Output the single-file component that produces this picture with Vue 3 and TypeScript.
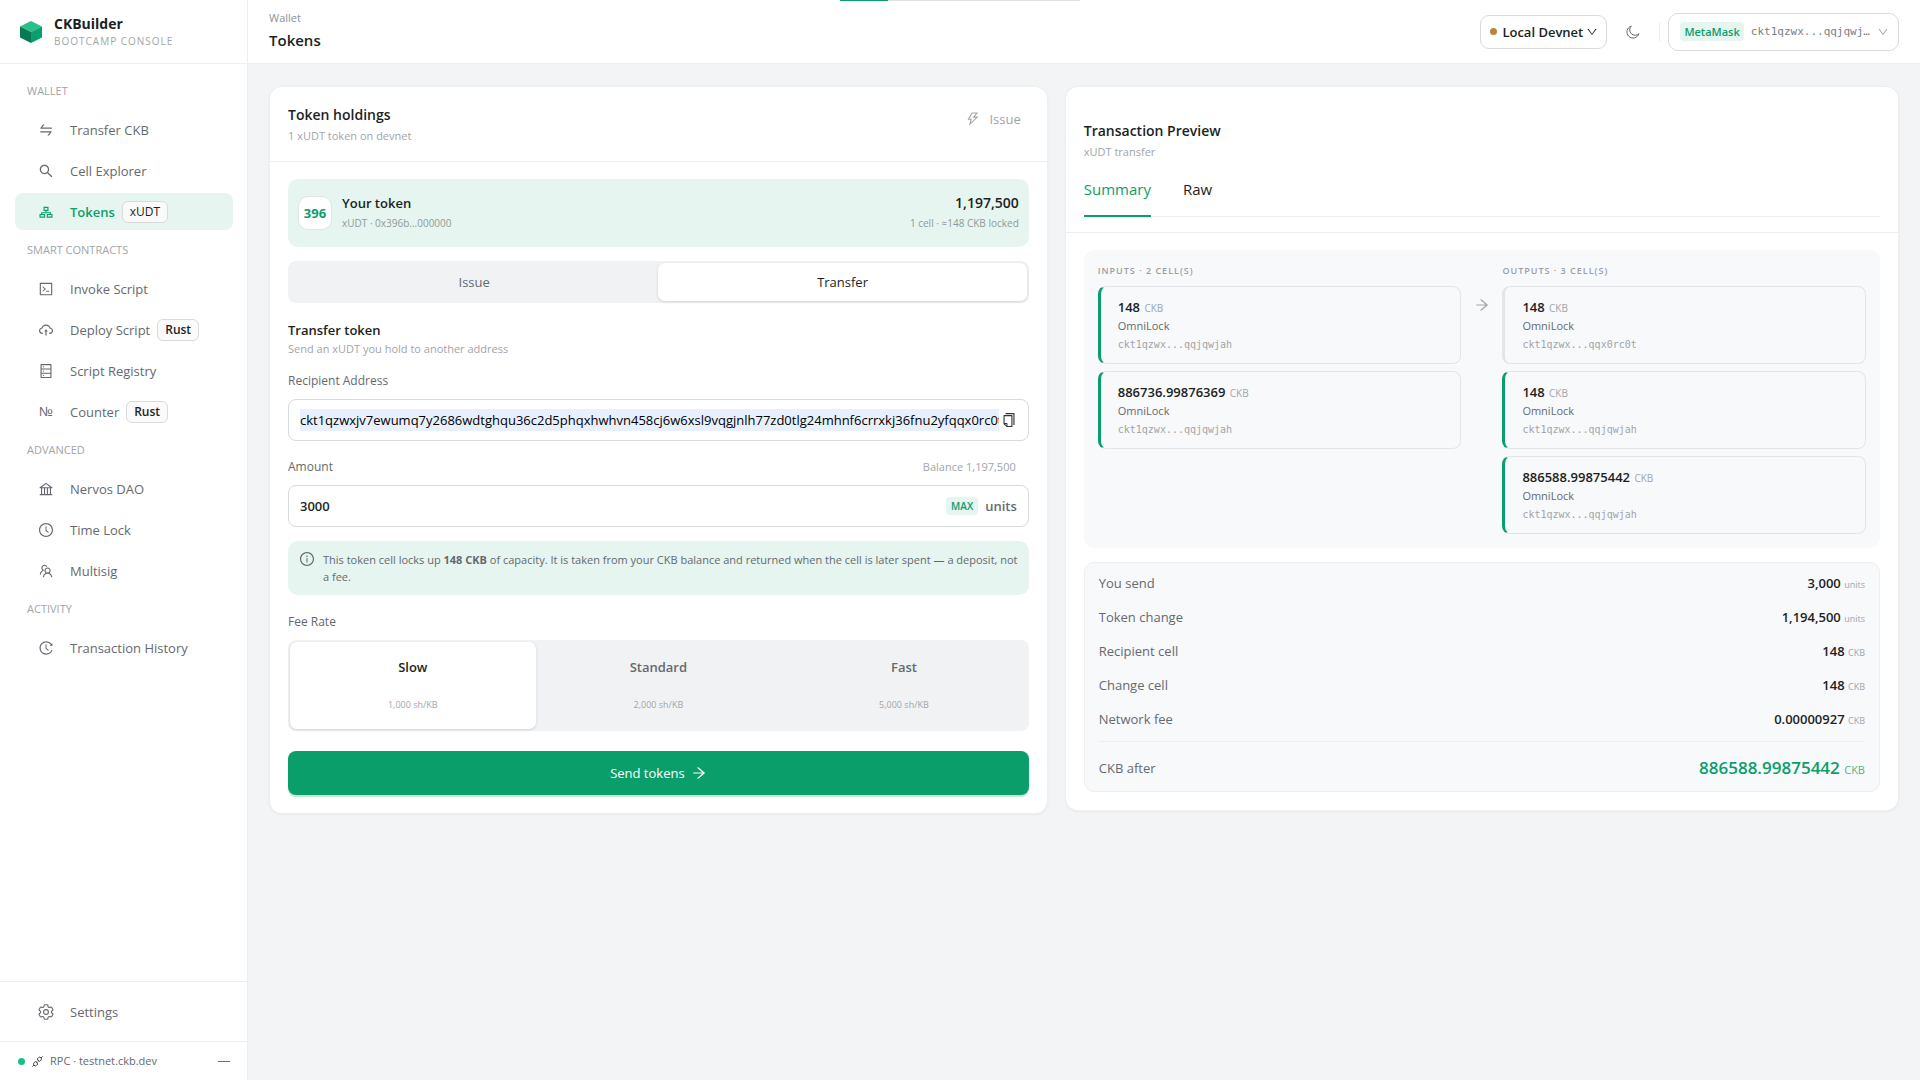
<script setup lang="ts">
import { ref, computed } from 'vue'

interface NavItem { label: string; icon: string; tag?: string }
interface NavGroup { title: string; items: NavItem[] }
interface Cell { amount: string; address: string; own: boolean }

const ring =
  'M512 64C264.6 64 64 264.6 64 512s200.6 448 448 448 448-200.6 448-448S759.4 64 512 64zm0 820c-205.4 0-372-166.6-372-372s166.6-372 372-372 372 166.6 372 372-166.6 372-372 372z'

const icons: Record<string, string> = {
  swap: 'M847.9 592H152c-4.4 0-8 3.6-8 8v60c0 4.4 3.6 8 8 8h605.2L612.9 851c-4.1 5.2-.4 13 6.3 13h72.5c4.9 0 9.5-2.2 12.6-6.1l168.8-214.1c16.5-21 1.6-51.8-25.2-51.8zM872 356H266.8l144.3-183c4.1-5.2.4-13-6.3-13h-72.5c-4.9 0-9.5 2.2-12.6 6.1L150.9 380.2c-16.5 21-1.6 51.8 25.1 51.8h696c4.4 0 8-3.6 8-8v-60c0-4.4-3.6-8-8-8z',
  search: 'M909.6 854.5L649.9 594.8C690.2 542.7 712 479 712 412c0-80.2-31.3-155.4-87.9-212.1-56.6-56.7-132-87.9-212.1-87.9s-155.5 31.3-212.1 87.9C143.2 256.5 112 331.8 112 412c0 80.1 31.3 155.5 87.9 212.1C256.5 680.8 331.8 712 412 712c67 0 130.6-21.8 182.7-62l259.7 259.6a8.2 8.2 0 0011.6 0l43.6-43.5a8.2 8.2 0 000-11.6zM570.4 570.4C528 612.7 471.8 636 412 636s-116-23.3-158.4-65.6C211.3 528 188 471.8 188 412s23.3-116.1 65.6-158.4C296 211.3 352.2 188 412 188s116.1 23.2 158.4 65.6S636 352.2 636 412s-23.3 116.1-65.6 158.4z',
  cluster: 'M352 176h320v264H546v84h280v108h102v240H560V632h194v-36H270v36h194v240H96V632h102V524h280v-84H352zM424 248v120h176V248zM168 704v96h224v-96zM632 704v96h224v-96z',
  code: 'M516 673c0 4.4 3.4 8 7.5 8h185c4.1 0 7.5-3.6 7.5-8v-48c0-4.4-3.4-8-7.5-8h-185c-4.1 0-7.5 3.6-7.5 8v48zm-194.9 6.1l192-161c3.8-3.2 3.8-9.1 0-12.3l-192-160.9A7.95 7.95 0 00308 351v62.7c0 2.4 1 4.6 2.9 6.1L420.7 512l-109.8 92.2a8.1 8.1 0 00-2.9 6.1V673c0 6.8 7.9 10.5 13.1 6.1zM880 112H144c-17.7 0-32 14.3-32 32v736c0 17.7 14.3 32 32 32h736c17.7 0 32-14.3 32-32V144c0-17.7-14.3-32-32-32zm-40 728H184V184h656v656z',
  cloud: 'M518.3 459a8 8 0 00-12.6 0l-112 141.7a7.98 7.98 0 006.3 12.9h73.9V856c0 4.4 3.6 8 8 8h60c4.4 0 8-3.6 8-8V613.7H624c6.7 0 10.4-7.7 6.3-12.9L518.3 459zM811.4 366.7C765.6 245.9 648.9 160 512.2 160S258.8 245.8 213 366.6C127.3 389.1 64 467.2 64 560c0 110.5 89.5 200 199.9 200H304c4.4 0 8-3.6 8-8v-60c0-4.4-3.6-8-8-8h-40.1c-33.7 0-65.4-13.4-89-37.7-23.5-24.2-36-56.8-34.9-90.6.9-26.4 9.9-51.2 26.2-72.1 16.7-21.3 40.1-36.8 66.1-43.7l37.9-9.9 13.9-36.6c8.6-22.8 20.6-44.1 35.7-63.4a245.6 245.6 0 0152.4-49.9c41.1-28.9 89.5-44.2 140-44.2s98.9 15.3 140 44.2c19.9 14 37.5 30.8 52.4 49.9 15.1 19.3 27.1 40.7 35.7 63.4l13.8 36.5 37.8 10C846.1 454.5 884 503.8 884 560c0 33.1-12.9 64.3-36.3 87.7a123.07 123.07 0 01-87.6 36.3H720c-4.4 0-8 3.6-8 8v60c0 4.4 3.6 8 8 8h40.1C870.5 760 960 670.5 960 560c0-92.7-63.1-170.7-148.6-193.3z',
  database: 'M832 64H192c-17.7 0-32 14.3-32 32v832c0 17.7 14.3 32 32 32h640c17.7 0 32-14.3 32-32V96c0-17.7-14.3-32-32-32zm-600 72h560v208H232V136zm560 480H232V408h560v208zm0 272H232V680h560v208zM304 240a40 40 0 1080 0 40 40 0 10-80 0zm0 272a40 40 0 1080 0 40 40 0 10-80 0zm0 272a40 40 0 1080 0 40 40 0 10-80 0z',
  bank: 'M894 462c30.9 0 43.8-39.7 18.7-58L530.8 126.2a31.81 31.81 0 00-37.6 0L111.3 404c-25.1 18.2-12.2 58 18.8 58H192v374h-72c-4.4 0-8 3.6-8 8v52c0 4.4 3.6 8 8 8h784c4.4 0 8-3.6 8-8v-52c0-4.4-3.6-8-8-8h-72V462h62zM512 196.7l271.1 197.2H240.9L512 196.7zM264 462h117v374H264V462zm189 0h117v374H453V462zm307 374H642V462h118v374z',
  clock: ring + 'M686.7 638.6L544.1 535.5V288c0-4.4-3.6-8-8-8H488c-4.4 0-8 3.6-8 8v275.4c0 2.6 1.2 5 3.3 6.5l165.4 120.6c3.6 2.6 8.6 1.8 11.2-1.7l28.6-39c2.6-3.7 1.8-8.7-1.8-11.2z',
  team: 'M824.2 699.9a301.55 301.55 0 00-86.4-60.4C783.1 602.8 812 546.8 812 484c0-110.8-92.4-201.7-203.2-200-109.1 1.7-197 90.6-197 200 0 62.8 29 118.8 74.2 155.5a300.95 300.95 0 00-86.4 60.4C345 754.6 314 826.8 312 903.8a8 8 0 008 8.2h56c4.3 0 7.9-3.4 8-7.7 1.9-58 25.4-112.3 66.7-153.5A226.62 226.62 0 01612 684c60.9 0 118.2 23.7 161.3 66.8C814.6 792 838 846.3 840 904.3c.1 4.3 3.7 7.7 8 7.7h56a8 8 0 008-8.2c-2-77-33-149.2-87.8-203.9zM612 612c-34.2 0-66.4-13.3-90.5-37.5a126.86 126.86 0 01-37.5-91.8c.3-32.8 13.4-64.5 36.3-88 24-24.6 56.1-38.3 90.4-38.7 33.9-.3 66.8 12.9 91 36.6 24.8 24.3 38.4 56.8 38.4 91.4 0 34.2-13.3 66.3-37.5 90.5A127.3 127.3 0 01612 612zM361.5 510.4c-.9-8.7-1.4-17.5-1.4-26.4 0-15.9 1.5-31.4 4.3-46.5.7-3.6-1.2-7.3-4.5-8.8-13.6-6.1-26.1-14.5-36.9-25.1a127.54 127.54 0 01-38.7-95.4c.9-32.1 13.8-62.6 36.3-85.6 24.7-25.3 57.9-39.1 93.2-38.7 31.9.3 62.7 12.6 86 34.4 7.9 7.4 14.7 15.6 20.4 24.4 2 3.1 5.9 4.4 9.3 3.2 17.6-6.1 36.2-10.4 55.3-12.4 5.6-.6 8.8-6.6 6.3-11.6-32.5-64.3-98.9-108.7-175.7-109.9-110.9-1.7-203.3 89.2-203.3 199.9 0 62.8 28.9 118.8 74.2 155.5-31.8 14.7-61.1 35-86.5 60.4-54.8 54.7-85.8 126.9-87.8 204a8 8 0 008 8.2h56.1c4.3 0 7.9-3.4 8-7.7 1.9-58 25.4-112.3 66.7-153.5 29.4-29.4 65.4-49.8 104.7-59.7 3.9-1 6.5-4.7 6-8.7z',
  history: 'M536.1 273H488c-4.4 0-8 3.6-8 8v275.3c0 2.6 1.2 5 3.3 6.5l165.3 120.7c3.6 2.6 8.6 1.9 11.2-1.7l28.6-39c2.7-3.7 1.9-8.7-1.7-11.2L544.1 528.5V281c0-4.4-3.6-8-8-8zm219.8 75.2l156.8 38.3c5 1.2 9.9-2.6 9.9-7.7l.8-161.5c0-6.7-7.7-10.5-12.9-6.3L752.9 334.1a8 8 0 003 14.1zm167.7 301.1l-56.7-19.5a8 8 0 00-10.1 4.8c-1.9 5.1-3.9 10.1-6 15.1-17.8 42.1-43.3 80-75.9 112.5a353 353 0 01-112.5 75.9 352.18 352.18 0 01-137.7 27.8c-47.8 0-94.1-9.3-137.7-27.8a353 353 0 01-112.5-75.9c-32.5-32.5-58-70.4-75.9-112.5A353.44 353.44 0 01171 512c0-47.8 9.3-94.2 27.8-137.8 17.8-42.1 43.3-80 75.9-112.5a353 353 0 01112.5-75.9C430.6 167.3 477 158 524.8 158s94.1 9.3 137.7 27.8A353 353 0 01775 261.7c10.2 10.3 19.8 21 28.6 32.3l59.8-46.8C784.7 146.6 662.2 81.9 524.6 82 285 82.1 92.6 276.7 95 516.4 97.4 751.9 288.9 942 524.8 942c185.5 0 343.5-117.6 403.7-282.3 1.5-4.2-.7-8.9-4.9-10.4z',
  info: ring + 'M464 336a48 48 0 1096 0 48 48 0 10-96 0zm72 112h-48c-4.4 0-8 3.6-8 8v272c0 4.4 3.6 8 8 8h48c4.4 0 8-3.6 8-8V456c0-4.4-3.6-8-8-8z',
  down: 'M884 256h-75c-5.1 0-9.9 2.5-12.9 6.6L512 654.2 227.9 262.6c-3-4.1-7.8-6.6-12.9-6.6h-75c-6.5 0-10.3 7.4-6.5 12.7l352.6 486.1c12.8 17.6 39 17.6 51.7 0l352.6-486.1c3.9-5.3.1-12.7-6.4-12.7z',
  arrow: 'M869 487.8L491.2 159.9c-2.9-2.5-6.6-3.9-10.5-3.9h-88.5c-7.4 0-10.8 9.2-5.2 14l350.2 304H152c-4.4 0-8 3.6-8 8v60c0 4.4 3.6 8 8 8h585.1L386.9 854c-5.6 4.9-2.2 14 5.2 14h91.5c1.9 0 3.8-.7 5.2-2L869 536.2a32.07 32.07 0 000-48.4z',
  copy: 'M832 64H296c-4.4 0-8 3.6-8 8v56c0 4.4 3.6 8 8 8h496v688c0 4.4 3.6 8 8 8h56c4.4 0 8-3.6 8-8V96c0-17.7-14.3-32-32-32zM704 192H192c-17.7 0-32 14.3-32 32v530.7c0 8.5 3.4 16.6 9.4 22.6l173.3 173.3c2.2 2.2 4.7 4 7.4 5.5v1.9h4.2c3.5 1.3 7.2 2 11 2H704c17.7 0 32-14.3 32-32V224c0-17.7-14.3-32-32-32zM350 856.2L263.9 770H350v86.2zM664 888H414V746c0-22.1-17.9-40-40-40H232V264h432v624z',
  bolt: 'M848 359.3H627.7L825.8 109c4.1-5.3.4-13-6.3-13H436c-2.8 0-5.5 1.5-6.9 4L170 547.5c-3.1 5.3.7 12 6.9 12h174.4l-89.4 357.6c-1.9 7.8 7.5 13.3 13.3 7.7L853.5 373c5.2-4.9 1.7-13.7-5.5-13.7zM378.2 732.5l60.3-241H281.1l189.6-327.4h224.6L487 427.4h211L378.2 732.5z',
}

const groups: NavGroup[] = [
  {
    title: 'WALLET',
    items: [
      { label: 'Transfer CKB', icon: 'swap' },
      { label: 'Cell Explorer', icon: 'search' },
      { label: 'Tokens', icon: 'cluster', tag: 'xUDT' },
    ],
  },
  {
    title: 'SMART CONTRACTS',
    items: [
      { label: 'Invoke Script', icon: 'code' },
      { label: 'Deploy Script', icon: 'cloud', tag: 'Rust' },
      { label: 'Script Registry', icon: 'database' },
      { label: 'Counter', icon: 'number', tag: 'Rust' },
    ],
  },
  {
    title: 'ADVANCED',
    items: [
      { label: 'Nervos DAO', icon: 'bank' },
      { label: 'Time Lock', icon: 'clock' },
      { label: 'Multisig', icon: 'team' },
    ],
  },
  { title: 'ACTIVITY', items: [{ label: 'Transaction History', icon: 'history' }] },
]

const current = 'Tokens'
const network = ref('Local Devnet')
const mode = ref('Transfer')
const fee = ref('Slow')
const view = ref('Summary')
const recipient = ref(
  'ckt1qzwxjv7ewumq7y2686wdtghqu36c2d5phqxhwhvn458cj6w6xsl9vqgjnlh77zd0tlg24mhnf6crrxkj36fnu2yfqqx0rc0t',
)
const amount = ref('3000')
const balance = 1197500

const fees = [
  { name: 'Slow', rate: '1,000 sh/KB' },
  { name: 'Standard', rate: '2,000 sh/KB' },
  { name: 'Fast', rate: '5,000 sh/KB' },
]

const inputs: Cell[] = [
  { amount: '148', address: 'ckt1qzwx...qqjqwjah', own: true },
  { amount: '886736.99876369', address: 'ckt1qzwx...qqjqwjah', own: true },
]
const outputs: Cell[] = [
  { amount: '148', address: 'ckt1qzwx...qqx0rc0t', own: false },
  { amount: '148', address: 'ckt1qzwx...qqjqwjah', own: true },
  { amount: '886588.99875442', address: 'ckt1qzwx...qqjqwjah', own: true },
]

const fmt = (n: number) => n.toLocaleString('en-US')
const lines = computed(() => [
  { label: 'You send', value: fmt(Number(amount.value)), unit: 'units' },
  { label: 'Token change', value: fmt(balance - Number(amount.value)), unit: 'units' },
  { label: 'Recipient cell', value: '148', unit: 'CKB' },
  { label: 'Change cell', value: '148', unit: 'CKB' },
  { label: 'Network fee', value: '0.00000927', unit: 'CKB' },
])
</script>

<template>
  <div class="app">
    <div class="loader" aria-hidden="true"><span class="loader-bar"></span></div>

    <aside class="sidebar">
      <div class="brand">
        <svg class="logo" viewBox="0 0 22 22" aria-hidden="true">
          <path d="M11 0 22 5.5 11 11 0 5.5z" fill="#2abf88" />
          <path d="M0 5.5 11 11v11L0 16.5z" fill="#077a52" />
          <path d="M22 5.500 11 11v11l11-5.500z" fill="#0a9e6b" />
        </svg>
        <div>
          <div class="brand-name">CKBuilder</div>
          <div class="brand-sub">BOOTCAMP CONSOLE</div>
        </div>
      </div>

      <nav class="nav">
        <section v-for="group in groups" :key="group.title">
          <h2 class="nav-title">{{ group.title }}</h2>
          <a
            v-for="item in group.items"
            :key="item.label"
            href="#"
            class="nav-item"
            :class="{ active: item.label === current }"
          >
            <span v-if="item.icon === 'number'" class="numero" aria-hidden="true">№</span>
            <svg v-else class="ico" viewBox="0 0 1024 1024" aria-hidden="true"><path :d="icons[item.icon]" /></svg>
            <span>{{ item.label }}</span>
            <span v-if="item.tag" class="tag">{{ item.tag }}</span>
          </a>
        </section>
      </nav>

      <div class="settings">
        <a href="#" class="nav-item">
          <svg class="ico line gear" viewBox="2 2 20 20" aria-hidden="true">
            <path d="M9.594 3.94c.09-.542.56-.94 1.11-.94h2.593c.55 0 1.02.398 1.11.94l.213 1.281c.063.374.313.686.645.87.074.04.147.083.22.127.325.196.72.257 1.075.124l1.217-.456a1.125 1.125 0 0 1 1.37.49l1.296 2.247a1.125 1.125 0 0 1-.26 1.431l-1.003.827c-.293.241-.438.613-.43.992a7.723 7.723 0 0 1 0 .255c-.008.378.137.75.43.991l1.004.827c.424.35.534.955.26 1.43l-1.298 2.247a1.125 1.125 0 0 1-1.369.491l-1.217-.456c-.355-.133-.75-.072-1.076.124a6.47 6.47 0 0 1-.22.128c-.331.183-.581.495-.644.869l-.213 1.281c-.09.543-.56.94-1.11.94h-2.594c-.55 0-1.019-.398-1.11-.94l-.213-1.281c-.062-.374-.312-.686-.644-.87a6.52 6.52 0 0 1-.22-.127c-.325-.196-.72-.257-1.076-.124l-1.217.456a1.125 1.125 0 0 1-1.369-.49l-1.297-2.247a1.125 1.125 0 0 1 .26-1.431l1.004-.827c.292-.24.437-.613.43-.991a6.932 6.932 0 0 1 0-.255c.007-.38-.138-.751-.43-.992l-1.004-.827a1.125 1.125 0 0 1-.26-1.43l1.297-2.247a1.125 1.125 0 0 1 1.37-.491l1.216.456c.356.133.751.072 1.076-.124.072-.044.146-.086.22-.128.332-.183.582-.495.644-.869l.214-1.28Z" />
            <circle cx="12" cy="12" r="3" />
          </svg>
          <span>Settings</span>
        </a>
      </div>

      <div class="rpc">
        <span class="dot green"></span>
        <svg class="plug" viewBox="0 0 14 14" aria-hidden="true">
          <path d="M1.500 12.500 3.200 10.800M12.500 1.500l-1.700 1.700M4.700 7 3.300 8.400a1.900 1.900 0 0 0 2.700 2.700L7.400 9.700zM9.300 7l1.400-1.400A1.900 1.900 0 0 0 8 2.900L6.600 4.300zM6 7.200l1.200-1.200M6.900 8.200l1.200-1.200" />
        </svg>
        <span class="rpc-text">RPC · testnet.ckb.dev</span>
        <span class="dash"></span>
      </div>
    </aside>

    <div class="main">
      <header class="topbar">
        <div class="heading">
          <div class="crumb">Wallet</div>
          <h1 class="page-title">Tokens</h1>
        </div>
        <div class="tools">
          <label class="network">
            <span class="dot amber"></span>
            <select v-model="network" class="network-select" aria-label="Network">
              <option>Local Devnet</option>
            </select>
            <svg class="chev" viewBox="0 0 1024 1024" aria-hidden="true"><path :d="icons.down" /></svg>
          </label>
          <button type="button" class="theme" aria-label="Dark mode">
            <svg class="moon" viewBox="0 0 14 14" aria-hidden="true"><path d="M5.300 1.100a6.100 6.100 0 1 0 7.600 7.600A5 5 0 0 1 5.300 1.100z" /></svg>
          </button>
          <span class="divider"></span>
          <button type="button" class="account">
            <span class="wallet">MetaMask</span>
            <span class="addr">ckt1qzwx...qqjqwj…</span>
            <svg class="chev faint" viewBox="0 0 1024 1024" aria-hidden="true"><path :d="icons.down" /></svg>
          </button>
        </div>
      </header>

      <main class="content">
        <section class="card">
          <div class="card-head">
            <div>
              <h2 class="card-title">Token holdings</h2>
              <p class="card-sub">1 xUDT token on devnet</p>
            </div>
            <button type="button" class="issue">
              <svg class="ico" viewBox="0 0 1024 1024" aria-hidden="true"><path :d="icons.bolt" /></svg>
              <span>Issue</span>
            </button>
          </div>

          <form class="card-body" @submit.prevent>
            <div class="holding">
              <span class="avatar">396</span>
              <div class="holding-name">
                <div class="strong">Your token</div>
                <div class="tiny">xUDT · 0x396b...000000</div>
              </div>
              <div class="holding-amount">
                <div class="figure">1,197,500</div>
                <div class="tiny">1 cell · ≈148 CKB locked</div>
              </div>
            </div>

            <div class="segmented" role="radiogroup" aria-label="Action">
              <label v-for="m in ['Issue', 'Transfer']" :key="m" class="seg" :class="{ on: mode === m }">
                <input v-model="mode" type="radio" name="mode" :value="m" class="sr" />
                <span>{{ m }}</span>
              </label>
            </div>

            <h3 class="form-title">Transfer token</h3>
            <p class="form-sub">Send an xUDT you hold to another address</p>

            <div class="label-row first"><label for="recipient">Recipient Address</label></div>
            <div class="field">
              <input id="recipient" v-model="recipient" type="text" class="text filled" />
              <button type="button" class="copy" aria-label="Copy address">
                <svg class="ico" viewBox="0 0 1024 1024" aria-hidden="true"><path :d="icons.copy" /></svg>
              </button>
            </div>

            <div class="label-row">
              <label for="amount">Amount</label>
              <span class="balance">Balance {{ fmt(balance) }}</span>
            </div>
            <div class="field">
              <input id="amount" v-model="amount" type="text" inputmode="numeric" class="text amount" />
              <button type="button" class="max" @click="amount = String(balance)">MAX</button>
              <span class="units">units</span>
            </div>

            <div class="notice">
              <svg class="ico" viewBox="0 0 1024 1024" aria-hidden="true"><path :d="icons.info" /></svg>
              <p>
                This token cell locks up <b>148 CKB</b> of capacity. It is taken from your CKB balance and returned
                when the cell is later spent — a deposit, not a fee.
              </p>
            </div>

            <div id="fee-label" class="fee-label">Fee Rate</div>
            <div class="segmented" role="radiogroup" aria-labelledby="fee-label">
              <label v-for="f in fees" :key="f.name" class="seg fee" :class="{ on: fee === f.name }">
                <input v-model="fee" type="radio" name="fee" :value="f.name" class="sr" />
                <span class="fee-name">{{ f.name }}</span>
                <span class="fee-rate">{{ f.rate }}</span>
              </label>
            </div>

            <button type="submit" class="send">
              <span>Send tokens</span>
              <svg class="ico" viewBox="0 0 1024 1024" aria-hidden="true"><path :d="icons.arrow" /></svg>
            </button>
          </form>
        </section>

        <section class="card">
          <div class="preview-head">
            <h2 class="card-title">Transaction Preview</h2>
            <p class="card-sub">xUDT transfer</p>
            <div class="tabs" role="tablist">
              <button
                v-for="t in ['Summary', 'Raw']"
                :key="t"
                type="button"
                role="tab"
                class="tab"
                :class="{ on: view === t }"
                :aria-selected="view === t"
                @click="view = t"
              >
                {{ t }}
              </button>
            </div>
          </div>

          <div class="card-body">
            <div class="flow">
              <div class="flow-col">
                <h3 class="flow-title">INPUTS · 2 CELL(S)</h3>
                <article v-for="(c, i) in inputs" :key="i" class="cell" :class="{ own: c.own }">
                  <div class="cell-amount">{{ c.amount }} <small>CKB</small></div>
                  <div class="cell-lock">OmniLock</div>
                  <div class="cell-addr">{{ c.address }}</div>
                </article>
              </div>
              <svg class="ico flow-arrow" viewBox="0 0 1024 1024" aria-hidden="true"><path :d="icons.arrow" /></svg>
              <div class="flow-col">
                <h3 class="flow-title">OUTPUTS · 3 CELL(S)</h3>
                <article v-for="(c, i) in outputs" :key="i" class="cell" :class="{ own: c.own }">
                  <div class="cell-amount">{{ c.amount }} <small>CKB</small></div>
                  <div class="cell-lock">OmniLock</div>
                  <div class="cell-addr">{{ c.address }}</div>
                </article>
              </div>
            </div>

            <dl class="totals">
              <div v-for="l in lines" :key="l.label" class="total">
                <dt>{{ l.label }}</dt>
                <dd>{{ l.value }} <small>{{ l.unit }}</small></dd>
              </div>
              <div class="total after">
                <dt>CKB after</dt>
                <dd>886588.99875442 <small>CKB</small></dd>
              </div>
            </dl>
          </div>
        </section>
      </main>
    </div>
  </div>
</template>

<style>
body {
  margin: 0;
  background: #f3f4f6;
}
</style>

<style scoped>
.app {
  --green: #0a9e6b;
  --mint: #e6f5f0;
  --ink: #1c1f24;
  --mid: #65696f;
  --faint: #a1a5a9;
  --rule: #eceef0;
  --edge: #d7dade;
  --mono: "DejaVu Sans Mono", "Liberation Mono", monospace;
  display: flex;
  min-height: 100vh;
  background: #f3f4f6;
  color: var(--ink);
  font: 400 13px/20px "Open Sans", "Noto Sans", sans-serif;
}
.app * { box-sizing: border-box; }
button, input, select { font: inherit; color: inherit; }
button { cursor: pointer; }
h1, h2, h3, p, dl, dd { margin: 0; }
.ico { width: 16px; height: 16px; flex: none; fill: currentColor; }
.line { fill: none; stroke: currentColor; }
.gear { stroke-width: 1.4; }
.sr { position: absolute; opacity: 0; width: 1px; height: 1px; margin: 0; }

.loader {
  position: fixed;
  top: 0;
  left: 50%;
  width: 240px;
  margin-left: -120px;
  height: 1px;
  background: #dfe2e4;
}
.loader-bar { display: block; width: 20%; height: 1px; background: var(--green); }

.sidebar {
  display: flex;
  flex-direction: column;
  width: 248px;
  flex: none;
  background: #fff;
  border-right: 1px solid var(--rule);
}
.brand {
  display: flex;
  align-items: center;
  gap: 12px;
  height: 64px;
  padding: 0 20px;
  border-bottom: 1px solid var(--rule);
}
.logo { width: 22px; height: 22px; }
.brand-name { font-size: 14px; line-height: 18px; font-weight: 700; }
.brand-sub { font-size: 10px; line-height: 16px; letter-spacing: 1px; color: var(--faint); }
.nav { flex: 1; padding: 7px 14px 0 15px; }
.nav-title {
  padding: 10px 12px;
  font-size: 11px;
  line-height: 20px;
  font-weight: 400;
  color: var(--faint);
}
.nav-item {
  display: flex;
  align-items: center;
  height: 37px;
  margin-bottom: 4px;
  padding-left: 23px;
  border-radius: 8px;
  color: var(--mid);
  text-decoration: none;
}
.nav section .nav-item:last-child { margin-bottom: 0; }
.nav-item .ico, .numero { margin-right: 16px; }
.numero { width: 16px; font: 13px/16px "Liberation Sans", sans-serif; text-align: center; }
.nav-item.active { background: var(--mint); color: var(--green); font-weight: 600; }
.tag {
  margin-left: 7px;
  padding: 0 7px;
  border: 1px solid #d9dadc;
  border-radius: 6px;
  background: #fafafa;
  color: var(--ink);
  font-size: 12px;
  line-height: 20px;
  font-weight: 600;
}
.active .tag { font-weight: 400; }
.settings { padding: 11px 14px 7px 15px; border-top: 1px solid var(--rule); }
.rpc {
  display: flex;
  align-items: center;
  height: 39px;
  padding: 0 17px 0 18px;
  border-top: 1px solid var(--rule);
  font-size: 11px;
  color: var(--mid);
}
.dot { width: 7px; height: 7px; border-radius: 50%; flex: none; }
.dot.green { background: #14c08a; }
.dot.amber { background: #b8863a; }
.plug { width: 13px; height: 13px; margin: 0 6px; fill: none; stroke: #33373c; stroke-width: 1; }
.rpc-text { flex: 1; }
.dash { width: 12px; height: 1px; background: var(--green); }

.main { flex: 1; min-width: 0; }
.topbar {
  display: flex;
  justify-content: space-between;
  align-items: center;
  height: 64px;
  padding: 0 21px;
  background: #fff;
  border-bottom: 1px solid var(--rule);
}
.heading { padding-bottom: 4px; }
.crumb { font-size: 11px; line-height: 20px; color: #8d9196; }
.page-title { font-size: 15px; line-height: 24px; font-weight: 600; }
.tools { display: flex; align-items: center; }
.network {
  display: flex;
  align-items: center;
  height: 34px;
  padding: 0 8px 0 9px;
  border: 1px solid var(--edge);
  border-radius: 9px;
}
.network-select {
  appearance: none;
  margin: 0 3px 0 5px;
  padding: 0;
  border: 0;
  background: none;
  font-size: 13px;
  line-height: 20px;
  font-weight: 600;
}
.chev { width: 12px; height: 12px; flex: none; fill: #33373c; }
.chev.faint { fill: var(--faint); }
.theme { display: flex; padding: 0; margin: 0 19px; border: 0; background: none; color: var(--mid); }
.moon { width: 14px; height: 14px; fill: none; stroke: currentColor; stroke-width: 1; }
.divider { width: 1px; height: 20px; margin-right: 8px; background: var(--rule); }
.account {
  display: flex;
  align-items: center;
  height: 38px;
  padding: 0 9px 0 11px;
  border: 1px solid var(--edge);
  border-radius: 10px;
  background: #fff;
}
.wallet {
  padding: 0 4px;
  border-radius: 4px;
  background: var(--mint);
  color: var(--green);
  font-size: 11px;
  line-height: 19px;
  font-weight: 600;
}
.addr { margin: 0 7px; font: 11px/18px var(--mono); color: #7b8086; }

.content {
  display: grid;
  grid-template-columns: 14fr 15fr;
  gap: 19px;
  align-items: start;
  padding: 23px 22px;
}
.card {
  min-width: 0;
  border-radius: 12px;
  background: #fff;
  box-shadow: 0 0 0 1px #edeff1, 0 1px 3px rgba(20, 30, 40, 0.1);
}
.card-head {
  display: flex;
  justify-content: space-between;
  padding: 17px 18px 16px;
  border-bottom: 1px solid var(--rule);
}
.card-title { margin-bottom: 1px; font-size: 14px; line-height: 22px; font-weight: 600; }
.card-sub { font-size: 11px; line-height: 18px; color: var(--faint); }
.card-body { padding: 17px 18px 18px; }
.issue {
  display: flex;
  align-items: center;
  gap: 8px;
  height: 30px;
  padding: 0 8px;
  border: 0;
  background: none;
  color: var(--faint);
}
.holding {
  display: flex;
  align-items: center;
  gap: 10px;
  height: 68px;
  padding: 0 10px;
  border-radius: 10px;
  background: var(--mint);
}
.avatar {
  width: 34px;
  height: 34px;
  border: 1px solid #dfe6e3;
  border-radius: 10px;
  background: #fff;
  color: var(--green);
  font-size: 13px;
  line-height: 32px;
  font-weight: 700;
  text-align: center;
}
.holding-name { flex: 1; }
.holding-amount { text-align: right; }
.strong { font-weight: 600; font-size: 13px; }
.figure { font-weight: 600; font-size: 14px; }
.tiny { font-size: 10px; line-height: 20px; color: #8f9a98; }

.segmented {
  display: flex;
  padding: 2px;
  border-radius: 8px;
  background: #f1f2f4;
}
.holding + .segmented { margin-top: 14px; }
.seg {
  flex: 1 1 0;
  padding: 9px 0;
  border-radius: 7px;
  color: var(--mid);
  text-align: center;
}
.seg.on { background: #fff; color: var(--ink); box-shadow: 0 1px 3px rgba(20, 30, 40, 0.14); }
.fee { display: flex; flex-direction: column; gap: 20px; padding: 15px 0 16px; }
.fee-name { font-weight: 600; }
.fee-rate { font-size: 9px; line-height: 16px; color: var(--faint); }
.form-title { margin-top: 17px; font-size: 13px; line-height: 20px; font-weight: 600; }
.form-sub { font-size: 11px; line-height: 18px; color: var(--faint); }
.label-row {
  display: flex;
  justify-content: space-between;
  margin: 16px 0 8px;
  font-size: 12px;
  color: var(--mid);
}
.label-row.first { margin-top: 13px; }
.balance { padding-right: 13px; font-size: 11px; color: var(--faint); }
.field {
  display: flex;
  align-items: center;
  height: 42px;
  padding: 0 11px;
  border: 1px solid var(--edge);
  border-radius: 8px;
}
.text {
  flex: 1;
  min-width: 0;
  height: 22px;
  padding: 0;
  border: 0;
  outline: 0;
  background: none;
  font-size: 13px;
}
.filled { background: #e8f0fe; color: #000; }
.amount { font-weight: 600; }
.copy { display: flex; margin-left: 2px; padding: 0; border: 0; background: none; color: #33373c; }
.max {
  padding: 0 5px;
  border: 0;
  border-radius: 4px;
  background: var(--mint);
  color: var(--green);
  font-size: 10px;
  line-height: 18px;
  font-weight: 600;
}
.units { margin-left: 7px; color: var(--mid); font-weight: 600; }
.notice {
  display: flex;
  gap: 8px;
  margin-top: 14px;
  padding: 10px 4px 10px 11px;
  border-radius: 10px;
  background: var(--mint);
  color: var(--mid);
  font-size: 11px;
  line-height: 17px;
}
.fee-label { margin: 17px 0 8px; font-size: 12px; color: var(--mid); }
.send {
  display: flex;
  align-items: center;
  justify-content: center;
  gap: 6px;
  width: 100%;
  height: 44px;
  margin-top: 20px;
  border: 0;
  border-radius: 8px;
  background: var(--green);
  color: #fff;
  box-shadow: 0 2px 0 rgba(10, 158, 107, 0.25);
}

.preview-head { padding: 33px 18px 15px; border-bottom: 1px solid var(--rule); }
.tabs { display: flex; gap: 32px; margin-top: 16px; border-bottom: 1px solid var(--rule); }
.tab {
  margin-bottom: -1px;
  padding: 0 0 14px;
  border: 0;
  border-bottom: 2px solid transparent;
  background: none;
  font-size: 15px;
  line-height: 24px;
}
.tab.on { border-color: var(--green); color: var(--green); }
.flow {
  display: flex;
  padding: 13px 14px 14px;
  border-radius: 10px;
  background: #f8f9fb;
}
.flow-col { display: flex; flex-direction: column; flex: 1 1 0; gap: 7px; min-width: 0; }
.flow-title { font-size: 9px; line-height: 16px; font-weight: 600; letter-spacing: 1px; color: #9a9ea3; }
.flow-arrow { margin: 34px 12px 0 13px; color: var(--faint); }
.cell {
  padding: 10px 17px 8px;
  border: 1px solid #e3e5e8;
  border-left: 3px solid #e3e5e8;
  border-radius: 8px;
}
.cell.own { border-left-color: var(--green); }
.cell-amount { font-weight: 600; }
.cell-amount small { margin-left: 1px; font-size: 10px; }
.cell-lock { font-size: 11px; line-height: 18px; color: var(--mid); }
.cell-addr { font: 10px/20px var(--mono); color: var(--faint); }
small { font-size: 9px; line-height: 1; font-weight: 400; color: var(--faint); }
.totals {
  margin-top: 14px;
  padding: 3px 14px 7px;
  border: 1px solid var(--rule);
  border-radius: 10px;
  background: #f8f9fb;
}
.total { display: flex; justify-content: space-between; align-items: center; height: 34px; color: var(--mid); }
.total dd { color: var(--ink); font-weight: 600; }
.after { height: 43px; margin-top: 5px; padding-top: 10px; border-top: 1px solid var(--rule); }
.total.after dd { color: var(--green); font-size: 17px; }
.after small { color: var(--green); font-size: 11px; opacity: 0.75; }
</style>
